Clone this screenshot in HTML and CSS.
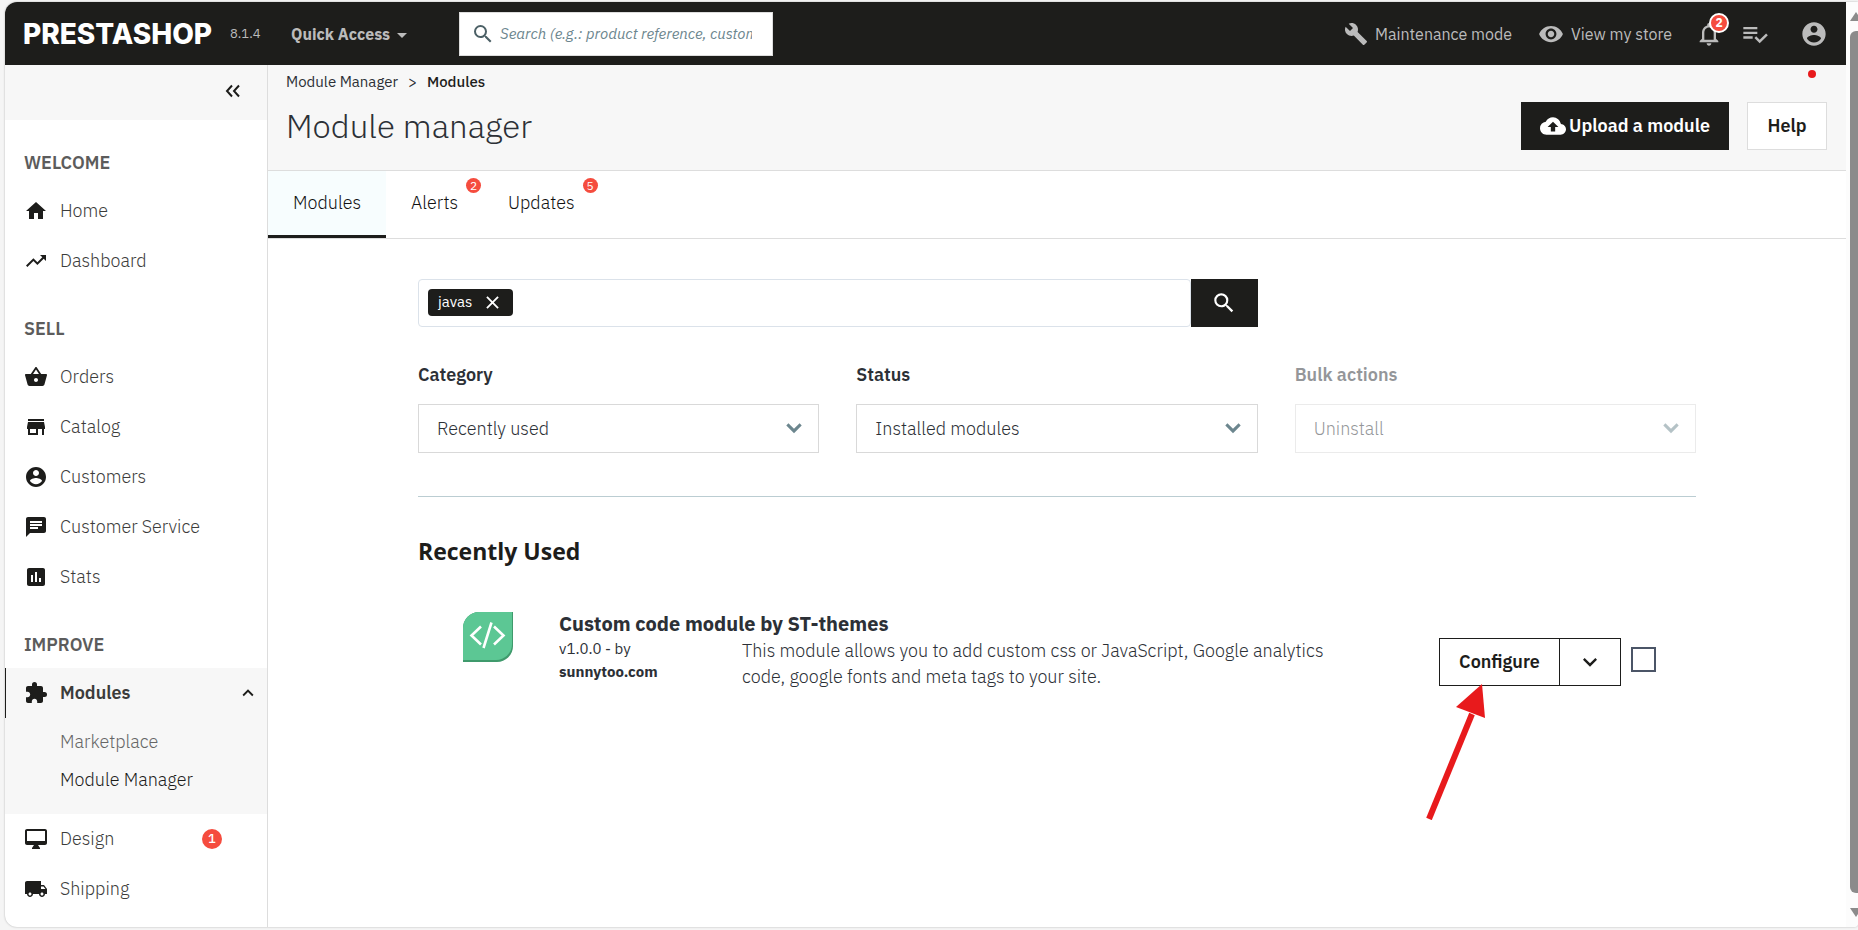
FILE: index.html
```html
<!DOCTYPE html>
<html lang="en">
<head>
<meta charset="utf-8">
<title>Module manager</title>
<link rel="stylesheet" href="styles.css">
</head>
<body>
<svg class="sprite" aria-hidden="true">
  <symbol id="i-search" viewBox="0 0 24 24"><path d="M15.5 14h-.79l-.28-.27A6.47 6.47 0 0 0 16 9.5 6.5 6.5 0 1 0 9.5 16c1.61 0 3.09-.59 4.23-1.57l.27.28v.79l5 4.99L20.49 19l-4.99-5zm-6 0C7.01 14 5 11.99 5 9.5S7.01 5 9.5 5 14 7.01 14 9.5 11.99 14 9.5 14z"/></symbol>
  <symbol id="i-account" viewBox="0 0 24 24"><path d="M12 2C6.48 2 2 6.48 2 12s4.48 10 10 10 10-4.48 10-10S17.52 2 12 2zm0 3c1.66 0 3 1.34 3 3s-1.34 3-3 3-3-1.34-3-3 1.34-3 3-3zm0 14.2c-2.5 0-4.71-1.28-6-3.22.03-1.99 4-3.08 6-3.08 1.99 0 5.97 1.09 6 3.08-1.29 1.94-3.5 3.22-6 3.22z"/></symbol>
  <symbol id="i-down" viewBox="0 0 24 24"><path d="M7.41 8.59 12 13.17l4.59-4.58L18 10l-6 6-6-6z"/></symbol>
  <symbol id="i-down-bold" viewBox="0 0 24 24"><path d="M7.200 8 12 12.600 16.800 8l1.800 1.800L12 16.400 5.400 9.800z"/></symbol>
  <symbol id="i-up" viewBox="0 0 24 24"><path d="M7.41 15.41 12 10.83l4.59 4.58L18 14l-6-6-6 6z"/></symbol>
</svg>
<div class="window">
  <div class="page">
    <header class="topbar">
      <a class="logo" href="#">PRESTASHOP</a>
      <span class="version">8.1.4</span>
      <button class="quick" type="button">Quick Access <span class="caret"></span></button>
      <form class="search">
        <svg class="search-icon" viewBox="0 0 24 24"><use href="#i-search"/></svg>
        <input type="text" aria-label="Search" placeholder="Search (e.g.: product reference, customer name…)">
      </form>
      <nav class="tools">
        <a class="tool maintenance" href="#"><svg class="icon24" viewBox="0 0 24 24"><path d="M22.7 19l-9.1-9.1c.9-2.3.4-5-1.5-6.9-2-2-5-2.4-7.4-1.3L9 6 6 9 1.6 4.7C.4 7.1.9 10.1 2.9 12.1c1.9 1.9 4.6 2.4 6.9 1.5l9.1 9.1c.4.4 1 .4 1.4 0l2.3-2.3c.5-.4.5-1.1.1-1.4z"/></svg>Maintenance mode</a>
        <a class="tool" href="#"><svg class="icon26" viewBox="0 0 24 24"><path d="M12 4.5C7 4.5 2.73 7.61 1 12c1.73 4.39 6 7.5 11 7.5s9.27-3.11 11-7.5c-1.73-4.39-6-7.5-11-7.5zM12 17c-2.76 0-5-2.24-5-5s2.24-5 5-5 5 2.24 5 5-2.24 5-5 5zm0-8c-1.66 0-3 1.34-3 3s1.34 3 3 3 3-1.34 3-3-1.34-3-3-3z"/></svg>View my store</a>
        <button class="tool-btn bell" type="button" aria-label="Notifications"><svg class="icon28" viewBox="0 0 24 24"><path d="M12 22c1.1 0 2-.9 2-2h-4c0 1.1.9 2 2 2zm6-6v-5c0-3.07-1.63-5.64-4.5-6.32V4c0-.83-.67-1.5-1.5-1.5s-1.5.67-1.5 1.5v.68C7.64 5.36 6 7.92 6 11v5l-2 2v1h16v-1l-2-2zm-2 1H8v-6c0-2.48 1.51-4.5 4-4.5s4 2.02 4 4.5v6z"/></svg><span class="bell-badge">2</span></button>
        <button class="tool-btn list" type="button" aria-label="Tasks"><svg class="icon28" viewBox="0 0 24 24"><path d="M14 10H2v2h12v-2zm0-4H2v2h12V6zM2 16h8v-2H2v2zm19.500-4.500L23 13l-6.990 7-4.510-4.500L13 14l3.010 3 5.490-5.500z"/></svg></button>
        <button class="tool-btn account" type="button" aria-label="Account"><svg class="icon28" viewBox="0 0 24 24"><use href="#i-account"/></svg></button>
      </nav>
    </header>
    <div class="body">
      <aside class="sidebar">
        <div class="collapse"><button class="plain" type="button" aria-label="Collapse menu"><svg class="double" viewBox="0 0 16 14"><path d="M7 1.500 2 7l5 5.500M14 1.500 9 7l5 5.500"/></svg></button></div>
        <nav>
          <h2 class="group">WELCOME</h2>
          <a class="item" href="#"><svg viewBox="0 0 24 24"><path d="M10 20v-6h4v6h5v-8h3L12 3 2 12h3v8z"/></svg>Home</a>
          <a class="item" href="#"><svg viewBox="0 0 24 24"><path d="m16 6 2.290 2.290-4.880 4.880-4-4L2 16.590 3.410 18l6-6 4 4 6.300-6.290L22 12V6z"/></svg>Dashboard</a>
          <h2 class="group">SELL</h2>
          <a class="item" href="#"><svg viewBox="0 0 24 24"><path d="m17.210 9-4.380-6.560c-.190-.280-.510-.420-.830-.420-.320 0-.640.140-.830.430L6.790 9H2c-.550 0-1 .450-1 1 0 .090.010.180.040.270l2.540 9.270c.230.840 1 1.460 1.920 1.460h13c.920 0 1.690-.620 1.930-1.460l2.540-9.270L23 10c0-.550-.450-1-1-1h-4.790zM9 9l3-4.400L15 9H9zm3 8c-1.100 0-2-.900-2-2s.900-2 2-2 2 .900 2 2-.900 2-2 2z"/></svg>Orders</a>
          <a class="item" href="#"><svg viewBox="0 0 24 24"><path d="M20 4H4v2h16V4zm1 10v-2l-1-5H4l-1 5v2h1v6h10v-6h4v6h2v-6h1zm-9 4H6v-4h6v4z"/></svg>Catalog</a>
          <a class="item" href="#"><svg viewBox="0 0 24 24"><use href="#i-account"/></svg>Customers</a>
          <a class="item" href="#"><svg viewBox="0 0 24 24"><path d="M20 2H4c-1.100 0-1.990.900-1.990 2L2 22l4-4h14c1.100 0 2-.900 2-2V4c0-1.100-.900-2-2-2zM6 9h12v2H6V9zm8 5H6v-2h8v2zm4-6H6V6h12v2z"/></svg>Customer Service</a>
          <a class="item" href="#"><svg viewBox="0 0 24 24"><path d="M19 3H5c-1.100 0-2 .900-2 2v14c0 1.100.900 2 2 2h14c1.100 0 2-.900 2-2V5c0-1.100-.900-2-2-2zM9 17H7v-7h2v7zm4 0h-2V7h2v10zm4 0h-2v-4h2v4z"/></svg>Stats</a>
          <h2 class="group">IMPROVE</h2>
          <div class="open">
            <a class="item current" href="#"><svg viewBox="0 0 24 24"><path d="M20.500 11H19V7c0-1.100-.900-2-2-2h-4V3.500a2.500 2.500 0 0 0-5 0V5H4c-1.100 0-1.990.900-1.990 2v3.800H3.500c1.490 0 2.700 1.210 2.700 2.700s-1.210 2.700-2.700 2.700H2V20c0 1.100.900 2 2 2h3.800v-1.500c0-1.490 1.210-2.700 2.700-2.700s2.700 1.210 2.700 2.700V22H17c1.100 0 2-.900 2-2v-4h1.500a2.500 2.500 0 0 0 0-5z"/></svg>Modules<svg class="fold" viewBox="0 0 24 24"><use href="#i-up"/></svg></a>
            <div class="sub">
              <a href="#">Marketplace</a>
              <a class="here" href="#">Module Manager</a>
            </div>
          </div>
          <a class="item" href="#"><svg viewBox="0 0 24 24"><path d="M21 2H3c-1.100 0-2 .900-2 2v12c0 1.100.900 2 2 2h7l-2 3v1h8v-1l-2-3h7c1.100 0 2-.900 2-2V4c0-1.100-.900-2-2-2zm0 12H3V4h18v10z"/></svg>Design<span class="count">1</span></a>
          <a class="item" href="#"><svg viewBox="0 0 24 24"><path d="M20 8h-3V4H3c-1.100 0-2 .900-2 2v11h2c0 1.660 1.340 3 3 3s3-1.340 3-3h6c0 1.660 1.340 3 3 3s3-1.340 3-3h2v-5l-3-4zM6 18.500c-.830 0-1.500-.670-1.500-1.500s.670-1.500 1.500-1.500 1.500.670 1.500 1.500-.670 1.500-1.500 1.500zm13.500-9 1.960 2.500H17V9.500h2.500zm-1.500 9c-.830 0-1.500-.670-1.500-1.500s.670-1.500 1.500-1.500 1.500.670 1.500 1.500-.670 1.500-1.500 1.500z"/></svg>Shipping</a>
        </nav>
      </aside>
      <main class="main">
        <div class="head">
          <nav class="crumbs" aria-label="Breadcrumb"><a href="#">Module Manager</a><span>&gt;</span><b>Modules</b></nav>
          <div class="head-row">
            <h1>Module manager</h1>
            <div class="actions">
              <button class="btn dark" type="button"><svg class="icon26" viewBox="0 0 24 24"><path d="M19.350 10.040A7.490 7.490 0 0 0 12 4C9.110 4 6.600 5.640 5.350 8.040A5.994 5.994 0 0 0 0 14c0 3.310 2.690 6 6 6h13c2.760 0 5-2.240 5-5 0-2.640-2.050-4.780-4.650-4.960zM14 13v4h-4v-4H7l5-5 5 5h-3z"/></svg>Upload a module</button>
              <button class="btn light" type="button">Help</button>
            </div>
          </div>
          <span class="mark-dot"></span>
        </div>
        <nav class="tabs">
          <a class="tab active" href="#">Modules</a>
          <a class="tab" href="#">Alerts<span class="tab-badge">2</span></a>
          <a class="tab" href="#">Updates<span class="tab-badge">5</span></a>
        </nav>
        <div class="content">
          <div class="filters">
            <form class="module-search">
              <div class="tagbox"><span class="tag">javas<button class="plain" type="button" aria-label="Remove javas"><svg class="cross" viewBox="0 0 14 14"><path d="m1 1 12 12M13 1 1 13"/></svg></button></span><input type="text" aria-label="Search modules"></div>
              <button class="go" type="button" aria-label="Search"><svg class="icon26" viewBox="0 0 24 24"><use href="#i-search"/></svg></button>
            </form>
            <div class="field first"><label for="category">Category</label><div class="pick"><select id="category"><option>Recently used</option></select><svg viewBox="0 0 24 24"><use href="#i-down-bold"/></svg></div></div>
            <div class="field"><label for="status">Status</label><div class="pick"><select id="status"><option>Installed modules</option></select><svg viewBox="0 0 24 24"><use href="#i-down-bold"/></svg></div></div>
            <div class="field off"><label for="bulk">Bulk actions</label><div class="pick"><select id="bulk" disabled><option>Uninstall</option></select><svg viewBox="0 0 24 24"><use href="#i-down-bold"/></svg></div></div>
          </div>
          <hr>
          <h2 class="section">Recently Used</h2>
          <article class="module">
            <svg class="module-logo" viewBox="0 0 50 50"><path fill="#3f9a6c" d="M16 0h34v34a16 16 0 0 1-16 16H0V16A16 16 0 0 1 16 0z"/><path fill="#5cc794" d="M16 0h33v32a16 16 0 0 1-16 16H0V16A16 16 0 0 1 16 0z"/><g fill="none" stroke="#fff" stroke-width="2.600"><path d="M18 14.500 8.500 23.500 18 32.500M31 14.500l9.500 9-9.500 9M28.500 10.500l-8 25.500"/></g></svg>
            <div class="module-body">
              <h3>Custom code module by ST-themes</h3>
              <div class="module-info">
                <p class="by">v1.0.0 - by<br><b>sunnytoo.com</b></p>
                <p class="desc">This module allows you to add custom css or JavaScript, Google analytics code, google fonts and meta tags to your site.</p>
              </div>
            </div>
            <div class="module-actions">
              <button class="configure" type="button">Configure</button><button class="more" type="button" aria-label="More actions"><svg viewBox="0 0 24 24"><use href="#i-down"/></svg></button>
              <input type="checkbox" aria-label="Select Custom code module">
              <svg class="pointer" viewBox="0 0 60 136"><path d="M3 135 46 30" stroke="#e81a1c" stroke-width="6"/><path fill="#e81a1c" d="M56 0 30 23l29 11z"/></svg>
            </div>
          </article>
        </div>
      </main>
    </div>
  </div>
  <div class="scroll" aria-hidden="true"><i class="arrow-up"></i><i class="thumb"></i><i class="arrow-down"></i></div>
</div>
</body>
</html>
```
FILE: styles.css
```css
* { box-sizing: border-box; }
body {
  margin: 0;
  height: 100vh;
  padding: 2px 0 3px 5px;
  background: #f5f5f5;
  font-family: "IBM Plex Sans", Roboto, "Liberation Sans", sans-serif;
  font-size: 18px;
  font-weight: 300;
  line-height: 26px;
  color: #2c3036;
  overflow: hidden;
}
h1, h2, h3, p { margin: 0; }
b { font-weight: 700; }
a { color: inherit; text-decoration: none; }
button, input, select { font: inherit; color: inherit; }
svg { fill: currentColor; flex: none; }
.sprite { position: absolute; width: 0; height: 0; }
.plain { display: flex; padding: 0; border: 0; background: none; }
.icon24 { width: 24px; height: 24px; }
.icon26 { width: 26px; height: 26px; }
.icon28 { width: 28px; height: 28px; }

.window {
  display: flex;
  height: 100%;
  overflow: hidden;
  background: #fff;
  border-radius: 12px 0 4px 12px;
  box-shadow: 0 0 2px #aaa;
}
.page { flex: 1; min-width: 0; display: flex; flex-direction: column; }

.topbar {
  display: flex;
  align-items: center;
  height: 63px;
  padding: 0 18px;
  background: #1d1d1b;
  color: #bbb;
  flex: none;
}
.logo {
  width: 207px;
  font-family: Inter, sans-serif;
  font-size: 28px;
  font-weight: 800;
  color: #fff;
}
.version { width: 61px; font-size: 13px; font-weight: 400; }
.quick {
  display: flex;
  align-items: center;
  gap: 7px;
  width: 168px;
  padding: 0;
  border: 0;
  background: none;
  font-size: 16px;
  font-weight: 700;
}
.caret { border: 5px solid transparent; border-top-color: #bbb; border-bottom: 0; margin-top: 4px; }
.search {
  display: flex;
  align-items: center;
  gap: 5px;
  width: 314px;
  height: 44px;
  padding: 0 20px 0 11px;
  border: 1px solid #ddd;
  background: #fff;
}
.search-icon { width: 24px; height: 24px; color: #4c6066; }
.search input {
  flex: 1;
  min-width: 0;
  padding: 0;
  border: 0;
  outline: 0;
  font-size: 15px;
  font-weight: 400;
  font-style: italic;
}
.search input::placeholder { color: #6c868e; }
.tools { display: flex; align-items: center; margin-left: auto; }
.tool { display: flex; align-items: center; gap: 7px; margin-right: 26px; font-size: 16px; font-weight: 400; }
.tool-btn { position: relative; display: flex; padding: 0; border: 0; background: none; }
.bell { margin-right: 18px; margin-left: -3px; }
.list { margin-right: 31px; }
.bell-badge {
  position: absolute;
  top: -7px;
  right: -6px;
  width: 20px;
  height: 20px;
  border: 2px solid #fff;
  border-radius: 50%;
  background: #f54c3e;
  color: #fff;
  font-size: 12px;
  font-weight: 700;
  line-height: 16px;
  text-align: center;
}

.body { flex: 1; min-height: 0; display: flex; }
.sidebar { width: 263px; flex: none; border-right: 1px solid #ddd; }
.collapse { display: flex; justify-content: flex-end; align-items: center; height: 55px; padding: 0 26px 4px 0; background: #f7f7f7; }
.double { width: 16px; height: 14px; fill: none; stroke: #1d1d1b; stroke-width: 2; }
.group { padding: 31px 19px 11px; font-size: 18px; font-weight: 600; line-height: 24px; color: #5c5c5c; }
.item { position: relative; display: flex; align-items: center; gap: 12px; height: 50px; padding: 0 8px 0 19px; color: #3c3c3b; }
.item > svg { width: 24px; height: 24px; color: #1d1d1b; }
.open { background: #f7f7f7; }
.current { padding-left: 18px; border-left: 1px solid #1d1d1b; font-weight: 600; }
.item .fold { width: 22px; height: 22px; margin-left: auto; }
.sub { display: flex; flex-direction: column; padding: 5px 0 15px 55px; line-height: 38px; color: #666; }
.sub .here { color: #1d1d1b; }
.count {
  width: 20px;
  height: 20px;
  margin: 0 37px 0 auto;
  border-radius: 50%;
  background: #f54c3e;
  color: #fff;
  font-size: 13px;
  font-weight: 500;
  line-height: 20px;
  text-align: center;
}

.main { flex: 1; min-width: 0; }
.head { position: relative; height: 106px; padding: 6px 19px 0 18px; background: #f7f7f7; border-bottom: 1px solid #ddd; }
.crumbs { display: flex; gap: 10px; font-size: 15px; font-weight: 400; line-height: 22px; }
.crumbs b { font-weight: 500; color: #1d1d1b; }
.head-row { display: flex; justify-content: space-between; padding-top: 9px; }
h1 { font-size: 33px; font-weight: 300; line-height: 48px; }
.actions { display: flex; gap: 18px; }
.btn { display: flex; align-items: center; justify-content: center; gap: 3px; height: 48px; font-weight: 600; border: 1px solid #1d1d1b; }
.dark { padding: 0 18px; background: #1d1d1b; color: #fff; }
.light { width: 80px; padding: 0; background: #fff; color: #1d1d1b; border-color: #ddd; }
.mark-dot { position: absolute; top: 5px; right: 30px; width: 8px; height: 8px; border-radius: 50%; background: #e81a1c; }

.tabs { display: flex; height: 68px; border-bottom: 1px solid #ddd; color: #111; }
.tab { position: relative; padding: 0 25px; line-height: 64px; }
.active { background: #f7fdfe; border-bottom: 3px solid #1d1d1b; }
.tab-badge {
  position: absolute;
  top: 7px;
  right: 2px;
  width: 15px;
  height: 15px;
  border-radius: 50%;
  background: #f54c3e;
  color: #fff;
  font-size: 12px;
  font-weight: 400;
  line-height: 15px;
  text-align: center;
}

.content { padding: 40px 150px 0; }
.filters { display: grid; grid-template-columns: repeat(3, 1fr); column-gap: 37px; row-gap: 36px; }
.module-search { grid-column: 1 / 3; display: flex; height: 48px; }
.first { grid-column-start: 1; }
.tagbox { flex: 1; min-width: 0; display: flex; align-items: center; padding: 0 9px 2px; border: 1px solid #dbe2ea; border-radius: 4px; }
.tagbox input { flex: 1; min-width: 0; border: 0; outline: 0; }
.tag { display: flex; align-items: center; gap: 14px; height: 27px; padding: 0 14px 0 10px; border-radius: 4px; background: #1d1d1b; color: #fff; font-size: 15px; font-weight: 400; }
.cross { width: 13px; height: 13px; fill: none; stroke: #fff; stroke-width: 2; }
.go { display: flex; align-items: center; justify-content: center; width: 67px; border: 0; background: #1d1d1b; color: #fff; }
.field label { display: block; font-size: 18px; font-weight: 600; line-height: 24px; margin-bottom: 17px; }
.pick { position: relative; }
.pick select { display: block; width: 100%; height: 49px; padding: 0 18px; border: 1px solid #d9d9d9; border-radius: 0; background: #fff; appearance: none; }
.pick svg { position: absolute; top: 10px; right: 11px; width: 28px; height: 28px; color: #6c868e; pointer-events: none; }
.off { opacity: 0.5; }
.off select { opacity: 1; }
hr { margin: 43px 0 37px; border: 0; border-top: 1px solid #bbcdd2; }
.section { font-family: "Open Sans", sans-serif; font-size: 23px; font-weight: 700; line-height: 34px; color: #1d1d1b; }

.module { display: flex; padding: 42px 40px 0 45px; }
.module-logo { width: 50px; height: 50px; margin: 2px 46px 0 0; }
.module-body { flex: 1; min-width: 0; }
h3 { padding-top: 1px; font-size: 20px; font-weight: 700; line-height: 26px; }
.module-info { display: flex; }
.by { width: 183px; font-size: 15px; font-weight: 400; line-height: 23px; }
.desc { width: 590px; padding-top: 1px; }
.module-actions { position: relative; display: flex; align-items: flex-start; padding-top: 28px; }
.configure, .more { height: 48px; border: 1px solid #1d1d1b; background: #fff; color: #1d1d1b; font-weight: 600; }
.configure { width: 121px; padding: 0; }
.more { display: flex; align-items: center; justify-content: center; width: 61px; padding: 0; border-left: 0; }
.more svg { width: 28px; height: 28px; }
.module-actions input { appearance: none; width: 25px; height: 25px; margin: 9px 0 0 10px; border: 2px solid #4b5567; background: #fff; }
.pointer { position: absolute; top: 74px; left: -13px; width: 60px; height: 136px; fill: none; }

.scroll { display: flex; flex-direction: column; align-items: flex-end; width: 12px; padding: 10px 0; background: #fcfcfc; overflow: hidden; }
.thumb { flex: 1; width: 8px; margin: 10px 0 15px; border-radius: 6px 0 0 6px; background: #8b8b8b; }
.arrow-up, .arrow-down { width: 0; border: 6px solid transparent; margin-right: -4px; }
.arrow-up { border-top: 0; border-bottom: 9px solid #8b8b8b; }
.arrow-down { border-bottom: 0; border-top: 9px solid #8b8b8b; }
```
